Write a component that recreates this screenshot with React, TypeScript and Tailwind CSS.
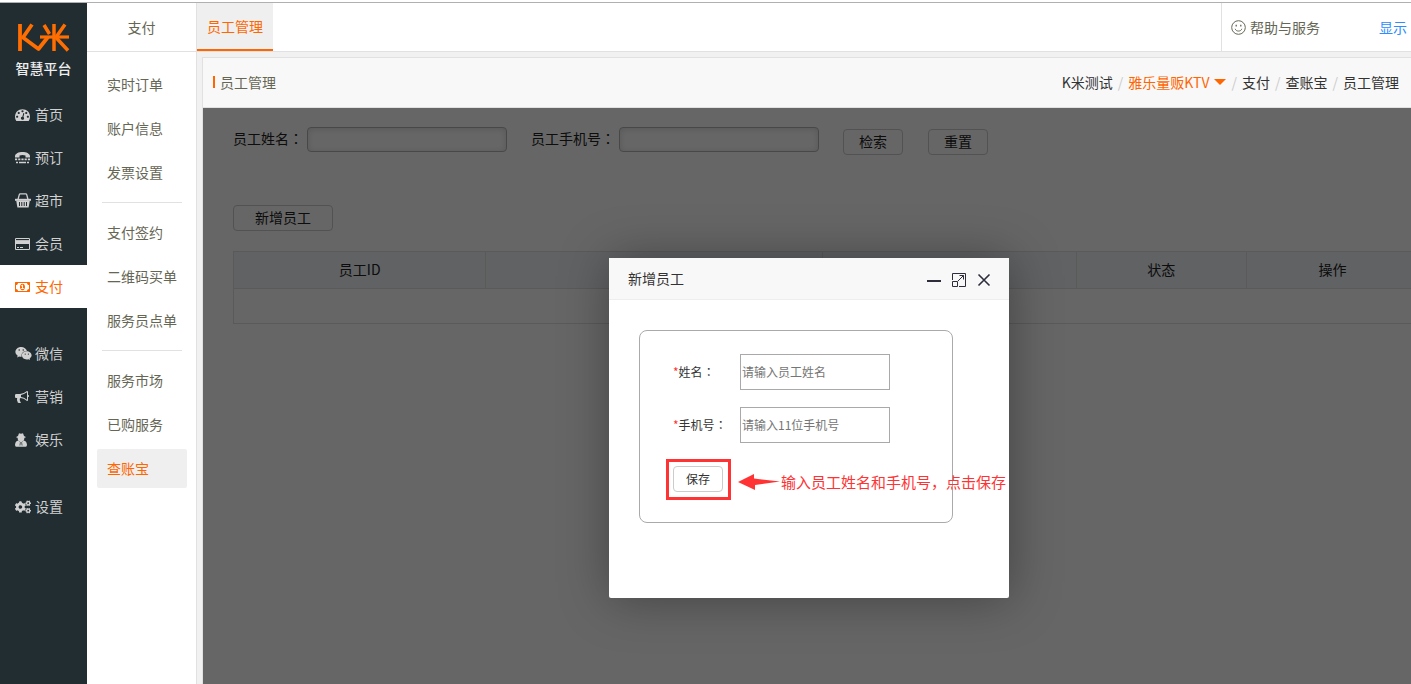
import type { ReactNode } from "react";
import { FaCogs, FaWeixin } from "react-icons/fa";

function Logo() {
    return (
        <div className="flex h-[90px] flex-col items-center pt-5 text-[#eeeeee]">
            <svg viewBox="0 0 52 30" className="h-[30px] w-[52px]" fill="none" stroke="#ff6e00" strokeWidth="3.800">
                <path d="M2 1v27" />
                <path d="M14 1.500 5 14.500l15.500 11.500L30 14" strokeLinejoin="round" />
                <path d="M22 14h29" strokeWidth="3.200" />
                <path d="M36 1v27" strokeWidth="3.500" />
                <path d="M26 2l5.500 9M47 1.500l-8.500 12M38 14.500l12 13" strokeWidth="3.500" />
            </svg>
            <span className="text-[14px] leading-[30px] font-medium">智慧平台</span>
        </div>
    );
}

function DashboardIcon() {
    return (
        <svg viewBox="0 0 1792 1792" className="h-[15px] w-[15px]" fill="currentColor">
            <path d="M384 1152q0-53-37.5-90.5t-90.5-37.5-90.5 37.5-37.5 90.5 37.5 90.5 90.5 37.5 90.5-37.5 37.5-90.5zm192-448q0-53-37.5-90.5t-90.5-37.5-90.5 37.5-37.5 90.5 37.5 90.5 90.5 37.5 90.5-37.5 37.5-90.5zm428 481l101-382q6-26-7.5-48.5t-38.5-29.5-48 6.5-30 39.5l-101 382q-60 5-107 43.5t-63 98.5q-20 77 20 146t117 89 146-20 89-117q16-60-6-117t-72-91zm660-33q0-53-37.5-90.5t-90.5-37.5-90.5 37.5-37.5 90.5 37.5 90.5 90.5 37.5 90.5-37.5 37.5-90.5zm-640-640q0-53-37.5-90.5t-90.5-37.5-90.5 37.5-37.5 90.5 37.5 90.5 90.5 37.5 90.5-37.5 37.5-90.5zm448 192q0-53-37.5-90.5t-90.5-37.5-90.5 37.5-37.5 90.5 37.5 90.5 90.5 37.5 90.5-37.5 37.5-90.5zm320 448q0 261-141 483-19 29-54 29h-1402q-35 0-54-29-141-221-141-483 0-182 71-348t191-286 286-191 348-71 348 71 286 191 191 286 71 348z" />
        </svg>
    );
}

function PhoneIcon() {
    return (
        <svg viewBox="0 0 15 12" className="h-3 w-[15px]" fill="currentColor">
            <path d="M0 5.500V4C.5 1.500 3.500 0 7.500 0S14.500 1.500 15 4v1.500h-4.500V3.600C8.500 2.900 6.500 2.900 4.500 3.600v1.900z" />
            <path d="M0 6.500h2.200v1.800H0zM3.200 6.500h2.200v1.800H3.200zM6.400 6.500h2.200v1.800H6.400zM9.600 6.500h2.200v1.800H9.600zM12.800 6.500H15v1.800h-2.200z" />
            <path d="M1 9.700h2v1.600H1zM4 9.700h7v1.600H4zM12 9.700h2v1.600h-2z" />
        </svg>
    );
}

function BasketIcon() {
    return (
        <svg viewBox="0 0 16 15" className="h-[15px] w-4" fill="currentColor">
            <path d="M3 6.500 4.300 1.600Q4.500.8 5.300.8h5.400q.8 0 1 .8L13 6.500" fill="none" stroke="currentColor" strokeWidth="1.300" />
            <path d="M0 5.800h16v2H0z" />
            <path
                fillRule="evenodd"
                d="M1.200 7.500h13.600l-1.200 7H2.400zM4 9v4h1V9zM6.300 9v4h1V9zM8.700 9v4h1V9zM11 9v4h1V9z"
            />
        </svg>
    );
}

function CardIcon() {
    return (
        <svg viewBox="0 0 1920 1792" className="h-[14px] w-[15px]" fill="currentColor">
            <path d="M1760 128q66 0 113 47t47 113v1216q0 66-47 113t-113 47h-1600q-66 0-113-47t-47-113v-1216q0-66 47-113t113-47h1600zm-1600 128q-13 0-22.5 9.5t-9.5 22.5v224h1664v-224q0-13-9.5-22.5t-22.5-9.5h-1600zm1600 1280q13 0 22.5-9.5t9.5-22.5v-608h-1664v608q0 13 9.5 22.5t22.5 9.5h1600zm-1504-128v-128h256v128h-256zm384 0v-128h384v128h-384z" />
            <path d="M64 400h1792v360h-1792z" />
        </svg>
    );
}

function MoneyIcon() {
    return (
        <svg viewBox="0 0 1920 1792" className="h-[14px] w-[15px]" fill="currentColor">
            <path d="M768 1152h384v-96h-128v-448h-114l-148 137 77 80q42-37 55-57h2v288h-128v96zm512-256q0 70-21 142t-59.5 134-101.5 101-138 39-138-39-101.5-101-59.5-134-21-142 21-142 59.5-134 101.5-101 138-39 138 39 101.5 101 59.5 134 21 142zm512 256v-512q-106 0-181-75t-75-181h-1152q0 106-75 181t-181 75v512q106 0 181 75t75 181h1152q0-106 75-181t181-75zm128-832v1152q0 26-19 45t-45 19h-1792q-26 0-45-19t-19-45v-1152q0-26 19-45t45-19h1792q26 0 45 19t19 45z" />
        </svg>
    );
}

function BullhornIcon() {
    return (
        <svg viewBox="0 0 1792 1792" className="h-[14px] w-[14px]" fill="currentColor">
            <path d="M1664 640q53 0 90.5 37.5t37.5 90.5-37.5 90.5-90.5 37.5v384q0 52-38 90t-90 38q-417-347-812-380-58 19-91 66t-31 100.500 40 92.500q-20 33-23 65.500t6 58 33.500 55 48 50 61.500 50.500q-29 58-111.500 83t-168.500 11.500-132-55.500q-7-23-29.500-87.500t-32-94.500-23-89-15-101 3.500-98.500 22-110.500h-122q-66 0-113-47t-47-113v-192q0-66 47-113t113-47h480q435 0 896-384 52 0 90 38t38 90v384zm-128 604v-954q-394 302-768 343v270q377 42 768 341z" />
        </svg>
    );
}

function AgentIcon() {
    return (
        <svg viewBox="0 0 12 14" className="h-[14px] w-3" fill="currentColor">
            <path d="M4 .3q2 .7 4 0L9 3l1.500.7v1H9.300C9.500 6 9 7 8.300 7.600l1.900.4q1.600 1 1.800 3.500 0 2.200-1.200 2.200H1.200Q0 13.700 0 11.500.2 9 1.800 8l1.900-.4C3 7 2.500 6 2.700 4.700H1.500v-1L3 3z" />
            <path d="M4.600 8.500l.8 1-.5 3M7.400 8.500l-.8 1 .5 3" fill="none" stroke="#222d32" strokeWidth="0.700" />
        </svg>
    );
}

interface NavItem {
    label: string;
    icon: ReactNode;
    active?: boolean;
}

const navGroups: NavItem[][] = [
    [
        { label: "首页", icon: <DashboardIcon /> },
        { label: "预订", icon: <PhoneIcon /> },
        { label: "超市", icon: <BasketIcon /> },
        { label: "会员", icon: <CardIcon /> },
        { label: "支付", icon: <MoneyIcon />, active: true },
    ],
    [
        { label: "微信", icon: <FaWeixin size={17} /> },
        { label: "营销", icon: <BullhornIcon /> },
        { label: "娱乐", icon: <AgentIcon /> },
    ],
    [{ label: "设置", icon: <FaCogs size={16} /> }],
];

const menuGroups = [
    ["实时订单", "账户信息", "发票设置"],
    ["支付签约", "二维码买单", "服务员点单"],
    ["服务市场", "已购服务", "查账宝"],
];

function Sidebar() {
    return (
        <nav className="w-[87px] shrink-0 bg-[#222d32]">
            <Logo />
            <div className="flex flex-col gap-6">
                {navGroups.map((group, i) => (
                    <div key={i}>
                        {group.map((item) => (
                            <a
                                key={item.label}
                                href="#"
                                className={`flex h-[43px] items-center pb-0.5 pl-[15px] ${
                                    item.active ? "bg-white text-[#ff6600]" : "text-[#d0d0d0]"
                                }`}
                            >
                                <span className="w-5 pt-0.5">{item.icon}</span>
                                {item.label}
                            </a>
                        ))}
                    </div>
                ))}
            </div>
        </nav>
    );
}

function SubMenu() {
    return (
        <aside className="w-[110px] shrink-0 border-r border-[#e1e1e1] bg-white text-[#666655]">
            <h2 className="flex h-[49px] items-center justify-center border-b border-[#e1e1e1]">支付</h2>
            <div className="pt-[13px] pr-[9px] pl-[10px]">
                {menuGroups.map((group, i) => (
                    <div key={i}>
                        {i > 0 && <hr className="mx-[5px] my-[10px] border-[#e1e1e1]" />}
                        <div className="flex flex-col gap-[5px]">
                            {group.map((label) => (
                                <a
                                    key={label}
                                    href="#"
                                    className={`flex h-[39px] items-center rounded-xs pb-0.5 pl-[10px] whitespace-nowrap ${
                                        label === "查账宝" ? "bg-[#efefef] text-[#ff6600]" : ""
                                    }`}
                                >
                                    {label}
                                </a>
                            ))}
                        </div>
                    </div>
                ))}
            </div>
        </aside>
    );
}

function TopBar() {
    return (
        <header className="flex h-[49px] border-b border-[#e1e1e1] bg-white">
            <a href="#" className="flex h-12 items-center border-b-2 border-[#ff6600] bg-[#efefef] px-[10px] text-[#ff6600]">
                员工管理
            </a>
            <div className="ml-auto flex items-center border-l border-[#e1e1e1] pr-1 pl-[9px]">
                <a href="#" className="flex items-center gap-1 text-[#666655]">
                    <svg viewBox="0 0 15 15" className="h-[15px] w-[15px]" fill="none" stroke="currentColor">
                        <circle cx="7.500" cy="7.500" r="6.800" />
                        <path d="M4.200 8.800c.6 3 6 3 6.600 0" />
                        <path d="M5.200 4.800v1.800M9.800 4.800v1.800" strokeWidth="1.300" />
                    </svg>
                    帮助与服务
                </a>
                <a href="#" className="ml-[59px] text-[#2d8cff]">
                    显示
                </a>
            </div>
        </header>
    );
}

function Slash() {
    return <span className="px-[5px] text-[#cccccc]">/</span>;
}

function PageHeader() {
    return (
        <div className="flex h-[50px] items-center justify-between border-b border-[#e1e1e1] bg-[#f8f8f8] pr-3 pb-0.5 pl-[10px]">
            <h1 className="flex items-center gap-[5px] text-[#666655]">
                <span className="h-3 w-0.5 bg-[#ff6600]" />
                员工管理
            </h1>
            <div className="flex items-center text-[#333333]">
                <a href="#">K米测试</a>
                <Slash />
                <button type="button" className="mr-px flex items-center gap-1 text-[#ff6600]">
                    雅乐量贩KTV
                    <svg viewBox="0 0 12 6" className="h-1.5 w-3" fill="currentColor">
                        <path d="M0 0h12L6 6z" />
                    </svg>
                </button>
                <Slash />
                <a href="#">支付</a>
                <Slash />
                <a href="#">查账宝</a>
                <Slash />
                <span>员工管理</span>
            </div>
        </div>
    );
}

// The TC face centres the full-width colon in its box
function Colon() {
    return <span className="font-['Noto_Sans_CJK_TC',sans-serif]">：</span>;
}

const searchInput = "ml-1 h-[25px] w-[200px] rounded border border-[#b4b4b4] bg-white px-2 shadow-[inset_0_1px_6px_rgba(0,0,0,0.15)]";
const plainButton = "h-[26px] rounded border border-[#cccccc] bg-white pb-0.5";

function StaffPage() {
    return (
        <div className="pt-[19px] pl-[30px] text-[#222222]">
            <form className="flex items-start">
                <label htmlFor="staff-name" className="leading-[22px]">
                    员工姓名
                    <Colon />
                </label>
                <input id="staff-name" type="text" className={searchInput} />
                <label htmlFor="staff-phone" className="ml-6 leading-[22px]">
                    员工手机号
                    <Colon />
                </label>
                <input id="staff-phone" type="text" className={searchInput} />
                <button type="button" className={`mt-0.5 ml-6 w-[60px] ${plainButton}`}>
                    检索
                </button>
                <button type="button" className={`mt-0.5 ml-[25px] w-[60px] ${plainButton}`}>
                    重置
                </button>
            </form>
            <button type="button" className={`mt-[50px] w-[100px] ${plainButton}`}>
                新增员工
            </button>
            <table className="mt-5 w-[calc(100%+8px)] table-fixed border-collapse">
                <colgroup>
                    <col className="w-[21.3%]" />
                    <col className="w-[28.4%]" />
                    <col className="w-[21.4%]" />
                    <col className="w-[14.4%]" />
                    <col className="w-[14.5%]" />
                </colgroup>
                <thead>
                    <tr className="h-[37px] bg-[#f1f5fa]">
                        <th className="border border-[#e1e1e1] pb-0.5 font-normal">员工ID</th>
                        <th className="border border-[#e1e1e1]" />
                        <th className="border border-[#e1e1e1]" />
                        <th className="border border-[#e1e1e1] pb-0.5 font-normal">状态</th>
                        <th className="border border-[#e1e1e1] pb-0.5 font-normal">操作</th>
                    </tr>
                </thead>
                <tbody>
                    <tr className="h-[35px]">
                        <td colSpan={5} className="border border-[#e1e1e1]" />
                    </tr>
                </tbody>
            </table>
        </div>
    );
}

interface FieldProps {
    id: string;
    label: string;
    placeholder: string;
}

function Field({ id, label, placeholder }: FieldProps) {
    return (
        <div className="flex items-center">
            <label htmlFor={id} className="w-[67px] whitespace-nowrap">
                <span className="text-[#ff3333]">*</span>
                {label}
                <Colon />
            </label>
            <input
                id={id}
                type="text"
                placeholder={placeholder}
                className="h-9 w-[150px] border border-[#a9a9a9] px-px pb-0.5 placeholder:text-[#757575]"
            />
        </div>
    );
}

function AddStaffModal() {
    return (
        <div role="dialog" aria-label="新增员工" className="h-[340px] w-[400px] rounded-xs bg-white shadow-[1px_1px_50px_rgba(0,0,0,0.35)]">
            <div className="flex h-[42px] items-center border-b border-[#eeeeee] bg-[#f8f8f8] pr-[18px] pl-[19px] text-[#333333]">
                <h2 className="pb-0.5">新增员工</h2>
                <div className="ml-auto flex items-center gap-[11px] pt-0.5 text-[#2e2d3c]">
                    <button type="button" aria-label="最小化">
                        <svg viewBox="0 0 14 14" className="h-[14px] w-[14px]" fill="currentColor">
                            <path d="M0 7h14v2H0z" />
                        </svg>
                    </button>
                    <button type="button" aria-label="最大化">
                        <svg viewBox="0 0 14 14" className="h-[14px] w-[14px]" fill="none" stroke="currentColor">
                            <path d="M.500 7V.500h13v13H7" />
                            <path d="M.500 8.500h5v5h-5z" />
                            <path d="M6 8l5.500-5.500M7.500 2.500h4v4" />
                        </svg>
                    </button>
                    <button type="button" aria-label="关闭">
                        <svg viewBox="0 0 14 14" className="h-[14px] w-[14px]" fill="none" stroke="currentColor" strokeWidth="1.600">
                            <path d="M1.500 1.500l11 11M12.500 1.500l-11 11" />
                        </svg>
                    </button>
                </div>
            </div>
            <form className="relative mx-[30px] mt-[30px] flex h-[193px] w-[314px] flex-col gap-[17px] rounded-lg border border-[#aaaaaa] pt-[23px] pl-[33px] text-[12px] text-[#333333]">
                <Field id="new-name" label="姓名" placeholder="请输入员工姓名" />
                <Field id="new-phone" label="手机号" placeholder="请输入11位手机号" />
                <button type="button" className="mt-[6px] h-[26px] w-[50px] rounded border border-[#cccccc] bg-white">
                    保存
                </button>
                <div className="absolute top-[128px] left-[26px] flex items-center text-[15px] whitespace-nowrap text-[#ff3333]">
                    <span className="h-[41px] w-[65px] border-[3px] border-[#ff3333]" />
                    <svg viewBox="0 0 42 16" className="mt-1 ml-[7px] h-4 w-[42px]" fill="currentColor">
                        <path d="M0 8 16 0v4.500L42 7.500 17 11v5z" />
                    </svg>
                    <span className="mt-1 ml-px">输入员工姓名和手机号，点击保存</span>
                </div>
            </form>
        </div>
    );
}

export default function App() {
    return (
        <div className="min-h-screen overflow-hidden bg-white pt-0.5 font-['Noto_Sans_CJK_SC','Liberation_Sans',sans-serif] text-[14px] leading-5">
            <div className="flex min-h-[calc(100vh-2px)] border-t border-[#b0b0b0]">
                <Sidebar />
                <SubMenu />
                <div className="flex min-w-0 flex-1 flex-col bg-[#f1f1f1]">
                    <TopBar />
                    <main className="mt-[5px] ml-[5px] flex flex-1 flex-col border-t border-l border-[#e1e1e1]">
                        <PageHeader />
                        <div className="relative flex-1 overflow-hidden bg-white">
                            <StaffPage />
                            <div className="absolute inset-0 flex items-start justify-center bg-black/60 pt-[150px] pl-1">
                                <AddStaffModal />
                            </div>
                        </div>
                    </main>
                </div>
            </div>
        </div>
    );
}
